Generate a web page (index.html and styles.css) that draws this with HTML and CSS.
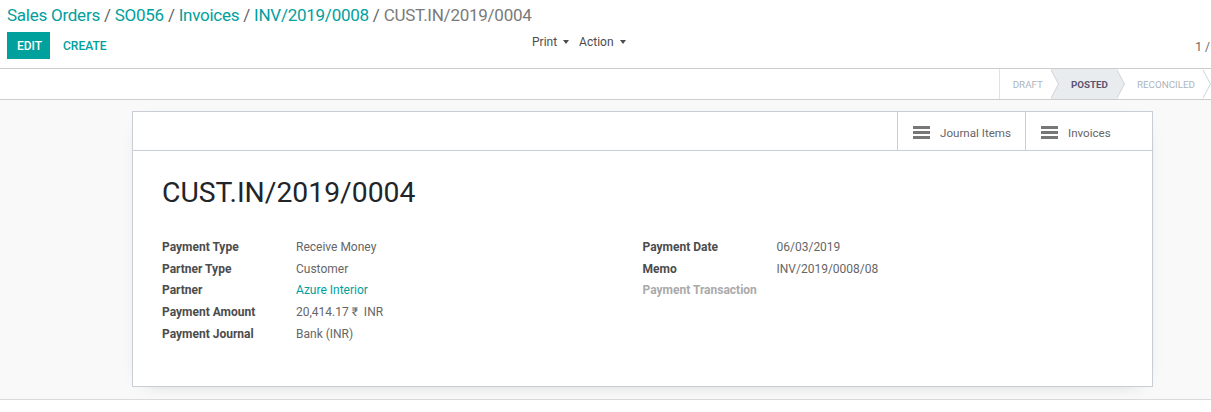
FILE: index.html
```html
<!DOCTYPE html>
<html>
<head>
<meta charset="utf-8">
<link rel="stylesheet" href="styles.css">
</head>
<body>
<div class="cp">
  <div class="breadcrumb">
    <a class="crumb">Sales Orders</a><span class="sep">/</span><a class="crumb">SO056</a><span class="sep">/</span><a class="crumb">Invoices</a><span class="sep">/</span><a class="crumb">INV/2019/0008</a><span class="sep">/</span><span class="crumb active">CUST.IN/2019/0004</span>
  </div>
  <div class="cp-row">
    <div class="cp-buttons">
      <button class="btn btn-primary">EDIT</button>
      <button class="btn btn-link">CREATE</button>
    </div>
    <div class="cp-sidebar">
      <span class="dd">Print<span class="caret"></span></span>
      <span class="dd">Action<span class="caret"></span></span>
    </div>
    <div class="pager">1 /</div>
  </div>
</div>
<div class="statusbar">
  <div class="status">
    <span class="st-btn first">DRAFT</span>
    <span class="st-btn current">POSTED</span>
    <span class="st-btn">RECONCILED</span>
  </div>
</div>
<div class="sheet-bg">
  <div class="sheet">
    <div class="button-box">
      <div class="stat-btn"><span class="bars"><i></i><i></i><i></i></span>Journal Items</div>
      <div class="stat-btn"><span class="bars"><i></i><i></i><i></i></span>Invoices</div>
    </div>
    <div class="sheet-body">
      <h1 class="title">CUST.IN/2019/0004</h1>
      <div class="groups">
        <div class="group">
          <div class="lbl">Payment Type</div><div class="val">Receive Money</div>
          <div class="lbl">Partner Type</div><div class="val">Customer</div>
          <div class="lbl">Partner</div><div class="val link">Azure Interior</div>
          <div class="lbl">Payment Amount</div><div class="val">20,414.17 ₹&nbsp; INR</div>
          <div class="lbl">Payment Journal</div><div class="val">Bank (INR)</div>
        </div>
        <div class="group">
          <div class="lbl">Payment Date</div><div class="val">06/03/2019</div>
          <div class="lbl">Memo</div><div class="val">INV/2019/0008/08</div>
          <div class="lbl muted">Payment Transaction</div><div class="val"></div>
        </div>
      </div>
    </div>
  </div>
</div>
</body>
</html>
```

FILE: styles.css
```css
html, body {
  margin: 0;
  padding: 0;
  overflow: hidden;
  background: #fff;
}
body {
  font-family: Roboto, "Liberation Sans", sans-serif;
  font-size: 12px;
  color: #666;
  width: 1211px;
  height: 412px;
}

/* control panel */
.cp {
  padding: 4px 0 9px 7px;
  border-bottom: 1px solid #ccc;
  white-space: nowrap;
}
.breadcrumb {
  font-size: 17px;
  letter-spacing: -0.25px;
  line-height: 22px;
  height: 22px;
}
.crumb { color: #00a09d; }
.crumb.active { color: #7a7a7a; }
.sep {
  color: #666;
  padding: 0 4px;
}
.cp-row {
  display: flex;
  align-items: center;
  margin-top: 6px;
  height: 27px;
}
.cp-buttons {
  flex: 0 0 518px;
  display: flex;
  align-items: center;
  gap: 1px;
}
.btn {
  font-family: Roboto, "Liberation Sans", sans-serif;
  font-size: 12px;
  font-weight: 500;
  border: none;
  height: 27px;
  padding: 0 10px;
  cursor: pointer;
  background: none;
}
.btn-primary {
  background: #00a09d;
  color: #fff;
  width: 43px;
}
.btn-link {
  color: #00a09d;
  margin-left: 2px;
}
.cp-sidebar {
  display: flex;
  gap: 10px;
  color: #4c4c4c;
  margin-top: -7px;
  padding-left: 7px;
}
.dd {
  display: inline-flex;
  align-items: center;
}
.caret {
  display: inline-block;
  width: 0;
  height: 0;
  margin-left: 6px;
  border-top: 4px solid #4c4c4c;
  border-left: 3px solid transparent;
  border-right: 3px solid transparent;
}
.pager {
  margin-left: auto;
  margin-right: 1px;
  color: #666;
  padding-top: 2px;
}

/* statusbar */
.statusbar {
  height: 30px;
  border-bottom: 1px solid #ccc;
  display: flex;
  justify-content: flex-end;
  overflow: hidden;
}
.status {
  display: flex;
  border-left: 1px solid #dee2e6;
  margin-right: 8px;
}
.st-btn {
  position: relative;
  display: flex;
  align-items: center;
  height: 30px;
  padding: 0 8px 0 20px;
  font-size: 9.8px;
  color: #adb5bd;
  background: #fff;
  text-transform: uppercase;
}
.st-btn.first { padding-left: 13px; }
.st-btn.current {
  background: #e9ecef;
  color: #5d5470;
  font-weight: 700;
  padding-right: 9px;
}
.st-btn::before,
.st-btn::after {
  content: "";
  position: absolute;
  top: 0;
  left: 100%;
  width: 0;
  height: 0;
  border-style: solid;
  border-width: 15px 0 15px 8px;
  border-color: transparent transparent transparent #cfd4da;
  z-index: 1;
}
.st-btn::after {
  margin-left: -1px;
  border-left-color: #fff;
  z-index: 2;
}
.st-btn.current::after { border-left-color: #e9ecef; }

/* sheet */
.sheet-bg {
  background: #f9f9f9;
  border-bottom: 1px solid #d8dadd;
  padding: 11px 58px 12px 132px;
}
.sheet {
  background: #fff;
  border: 1px solid #c9ced6;
  box-shadow: 0 5px 20px -15px rgba(0, 0, 0, 0.4);
  min-height: 274px;
}
.button-box {
  display: flex;
  justify-content: flex-end;
  height: 38px;
  border-bottom: 1px solid #c9ced6;
}
.stat-btn {
  display: flex;
  align-items: center;
  width: 128px;
  box-sizing: border-box;
  border-left: 1px solid #c9ced6;
  padding-left: 15px;
  padding-top: 4px;
  color: #666;
  font-size: 11.6px;
}
.stat-btn:last-child { width: 127px; }
.bars {
  display: flex;
  flex-direction: column;
  gap: 2px;
  width: 17px;
  margin-right: 10px;
  margin-top: -2px;
}
.bars i {
  display: block;
  height: 3px;
  background: #777;
}
.sheet-body {
  padding: 25px 29px 40px 29px;
}
.title {
  margin: 0;
  font-size: 28.3px;
  font-weight: 400;
  line-height: 34px;
  color: #212529;
}
.groups {
  display: flex;
  margin-top: 26px;
}
.group {
  flex: 1 1 50%;
  display: grid;
  grid-template-columns: 134px 1fr;
  grid-auto-rows: 21.8px;
  align-items: center;
  align-content: start;
}
.lbl {
  font-weight: 700;
  color: #4c4c4c;
}
.lbl.muted { color: #aaa; }
.val { color: #666; }
.val.link { color: #00a09d; }
```
